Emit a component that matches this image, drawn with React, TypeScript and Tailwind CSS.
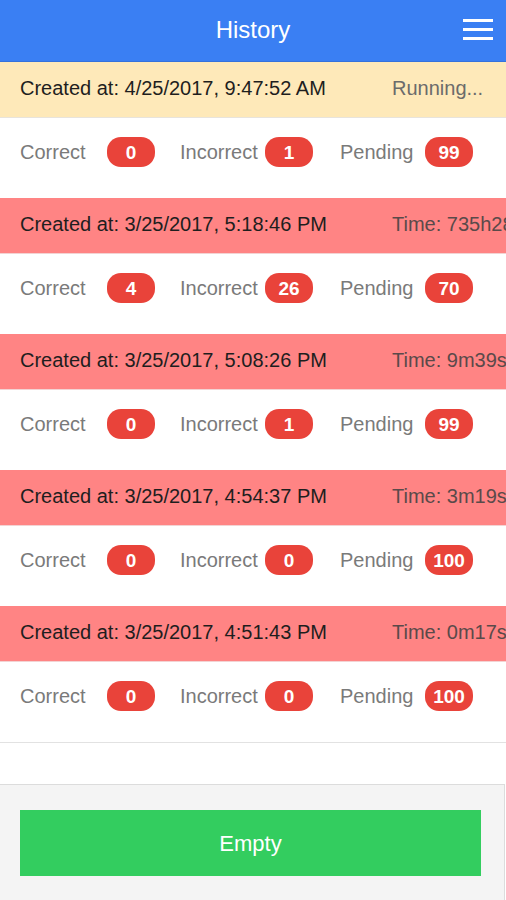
import React from 'react';

type Run = {
  created: string;
  status: string;
  running?: boolean;
  correct: number;
  incorrect: number;
  pending: number;
};

const runs: Run[] = [
  { created: '4/25/2017, 9:47:52 AM', status: 'Running...', running: true, correct: 0, incorrect: 1, pending: 99 },
  { created: '3/25/2017, 5:18:46 PM', status: 'Time: 735h28m11s', correct: 4, incorrect: 26, pending: 70 },
  { created: '3/25/2017, 5:08:26 PM', status: 'Time: 9m39s', correct: 0, incorrect: 1, pending: 99 },
  { created: '3/25/2017, 4:54:37 PM', status: 'Time: 3m19s', correct: 0, incorrect: 0, pending: 100 },
  { created: '3/25/2017, 4:51:43 PM', status: 'Time: 0m17s', correct: 0, incorrect: 0, pending: 100 },
];

function Badge({ value }: { value: number }) {
  return (
    <span className="flex items-center justify-center w-[48px] h-[30px] rounded-[14px] bg-[#e9433a] text-white text-[19px] font-bold leading-none">
      {value}
    </span>
  );
}

function Stat({ label, value, last }: { label: string; value: number; last?: boolean }) {
  return (
    <div className={`flex items-center ${last ? '' : 'w-[160px]'}`}>
      <span className={`${label === 'Correct' ? 'w-[87px]' : 'w-[85px]'} text-[20px] text-[#7a7a7a]`}>{label}</span>
      <Badge value={value} />
    </div>
  );
}

export default function App() {
  return (
    <div className="relative w-[506px] h-[900px] overflow-hidden bg-white font-['Liberation_Sans',Arial,sans-serif]">
      {/* Toolbar */}
      <div className="relative flex items-center justify-center h-[62px] pb-[2px] bg-[#3a7ff3] border-b border-[#3572dc]">
        <span className="text-[24px] text-white">History</span>
        <svg className="absolute right-[13px] top-[18px] w-[30px] h-[24px]" viewBox="0 0 30 24">
          <rect x="0" y="1" width="30" height="3" fill="#fff" />
          <rect x="0" y="10" width="30" height="3" fill="#fff" />
          <rect x="0" y="19" width="30" height="3" fill="#fff" />
        </svg>
      </div>

      {/* Run list */}
      <div className="flex flex-col">
        {runs.map((r, i) => (
          <div key={i} className={i === runs.length - 1 ? 'border-b border-[#e2e2e2]' : ''}>
            <div
              className={`flex items-center h-[55px] pb-[4px] overflow-hidden whitespace-nowrap text-[20px] ${
                r.running ? 'bg-[#fee9b9]' : 'bg-[#ff8484]'
              }`}
            >
              <span className="w-[392px] shrink-0 pl-[20px] text-[#1e1e1e]">Created at: {r.created}</span>
              <span className={r.running ? 'text-[#6b6b6b]' : 'text-[#5a4a4a]'}>{r.status}</span>
            </div>
            <div className={`flex items-start h-[81px] pl-[20px] pt-[19px] bg-white border-t ${r.running ? 'border-[#e8e4dc]' : 'border-[#f3d3d3]'}`}>
              <Stat label="Correct" value={r.correct} />
              <Stat label="Incorrect" value={r.incorrect} />
              <Stat label="Pending" value={r.pending} last />
            </div>
          </div>
        ))}
      </div>

      {/* Footer */}
      <div className="absolute left-0 bottom-0 w-[505px] h-[116px] bg-[#f4f4f4] border-t border-r border-[#dcdcdc] px-[20px] pt-[25px]">
        <button className="w-[461px] h-[66px] bg-[#33cd5f] text-white text-[22px]">Empty</button>
      </div>
    </div>
  );
}
